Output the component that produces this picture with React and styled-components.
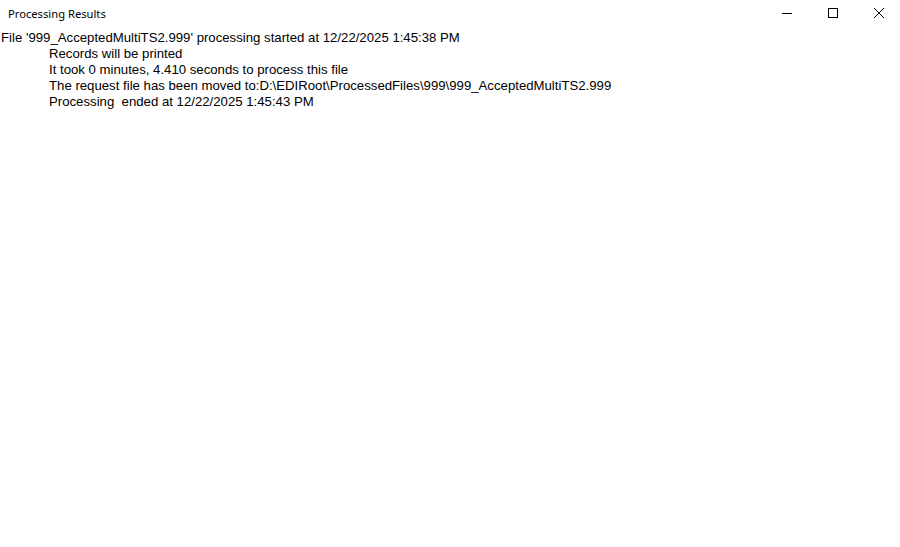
import React from "react";
import styled, { createGlobalStyle } from "styled-components";

const Global = createGlobalStyle`
  html, body {
    margin: 0;
    padding: 0;
    background: #ffffff;
  }
`;

const Window = styled.div`
  width: 900px;
  height: 547px;
  background: #ffffff;
  display: flex;
  flex-direction: column;
  overflow: hidden;
`;

const TitleBar = styled.div`
  height: 30px;
  display: flex;
  align-items: center;
  justify-content: space-between;
`;

const Title = styled.span`
  padding-left: 8px;
  margin-top: -3px;
  font-family: "Noto Sans", "Open Sans", sans-serif;
  font-size: 11.2px;
  color: #000000;
`;

const Caption = styled.div`
  display: flex;
  height: 100%;
  margin-right: -2px;
`;

const CaptionButton = styled.div`
  width: 46px;
  height: 100%;
  display: flex;
  align-items: center;
  justify-content: center;
  margin-top: -2px;
`;

const Log = styled.div`
  padding: 0 0 0 1px;
  font-family: "Liberation Sans", Arial, sans-serif;
  font-size: 13.2px;
  line-height: 16px;
  color: #000000;
`;

const Line = styled.div`
  padding-left: ${(p) => (p.$indent ? "48px" : "0")};
  white-space: pre;
`;

const lines = [
  { text: "File '999_AcceptedMultiTS2.999' processing started at 12/22/2025 1:45:38 PM" },
  { text: "Records will be printed", indent: true },
  { text: "It took 0 minutes, 4.410 seconds to process this file", indent: true },
  { text: "The request file has been moved to:D:\\EDIRoot\\ProcessedFiles\\999\\999_AcceptedMultiTS2.999", indent: true },
  { text: "Processing  ended at 12/22/2025 1:45:43 PM", indent: true },
];

export default function App() {
  return (
    <>
      <Global />
      <Window>
        <TitleBar>
          <Title>Processing Results</Title>
          <Caption>
            <CaptionButton>
              <svg width="10" height="10" viewBox="0 0 10 10">
                <path d="M0 5.5h10" stroke="#000" strokeWidth="1" />
              </svg>
            </CaptionButton>
            <CaptionButton>
              <svg width="10" height="10" viewBox="0 0 10 10">
                <rect x="0.5" y="0.5" width="9" height="9" fill="none" stroke="#000" strokeWidth="1" />
              </svg>
            </CaptionButton>
            <CaptionButton>
              <svg width="10" height="10" viewBox="0 0 10 10">
                <path d="M0 0L10 10M10 0L0 10" stroke="#000" strokeWidth="1" />
              </svg>
            </CaptionButton>
          </Caption>
        </TitleBar>
        <Log>
          {lines.map((l, i) => (
            <Line key={i} $indent={l.indent}>{l.text}</Line>
          ))}
        </Log>
      </Window>
    </>
  );
}
